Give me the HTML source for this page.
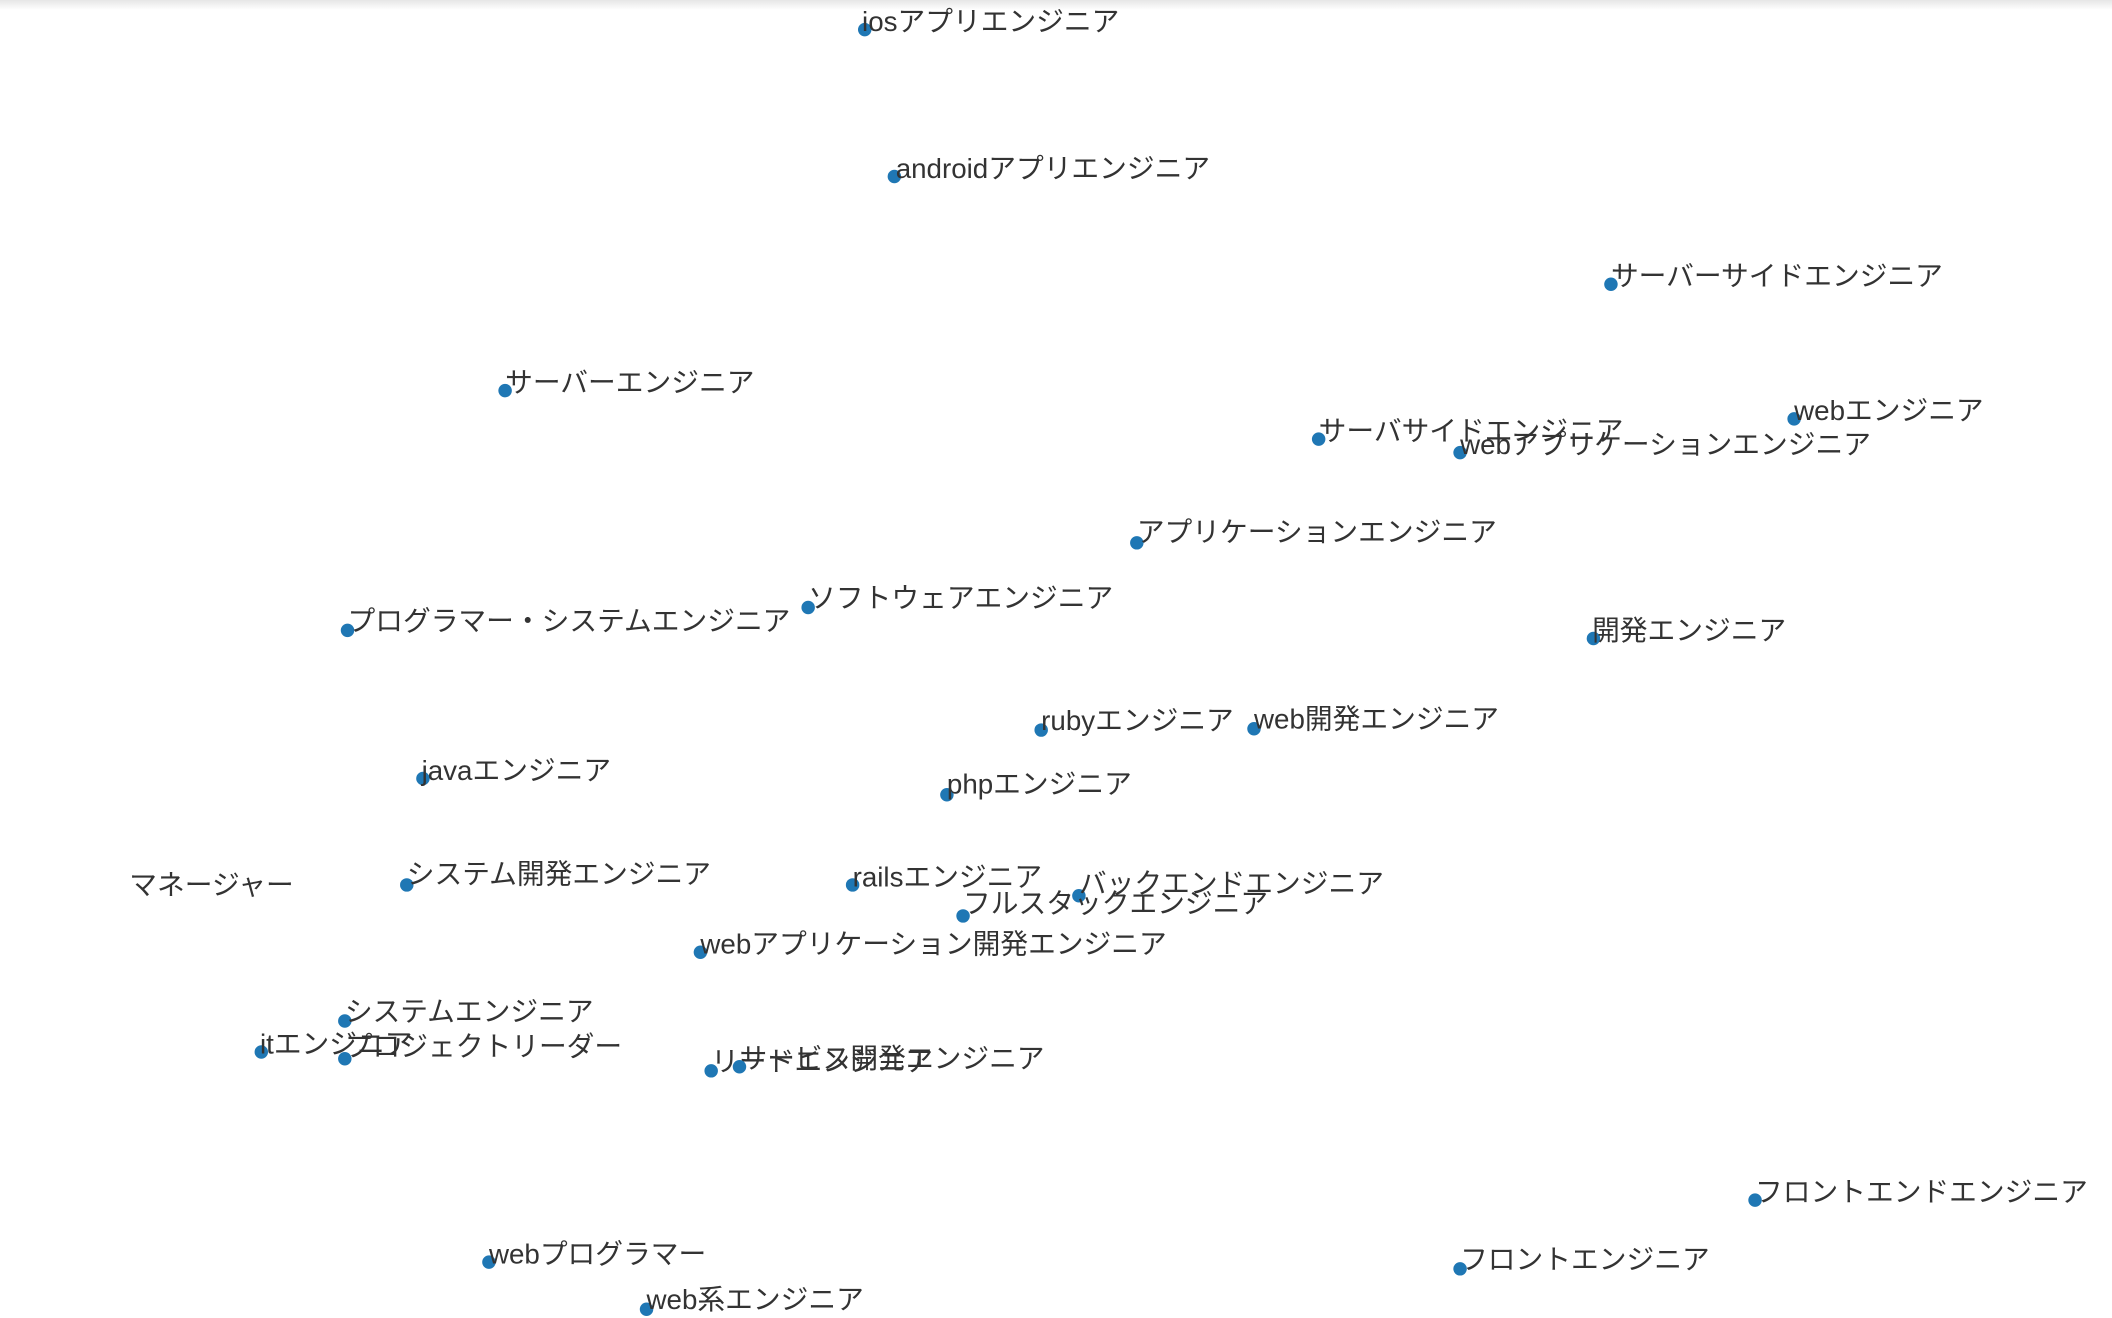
<!DOCTYPE html>
<html><head><meta charset="utf-8"><style>
html,body{margin:0;padding:0;background:#fff;width:2112px;height:1318px;overflow:hidden}
.top{position:absolute;left:0;top:0;width:2112px;height:10px;background:linear-gradient(#e6e6e6,#fff)}
svg{position:absolute;left:0;top:0}
text{font-family:"Liberation Sans","Noto Sans CJK JP",sans-serif;font-size:20.6px;fill:#333}
circle{fill:#1f77b4}
</style></head><body>
<div class="top"></div>
<svg width="2112" height="1318" viewBox="0 0 1568 978.5">
<g>
<circle cx="642" cy="22" r="5"/><text x="640" y="23">iosアプリエンジニア</text>
<circle cx="664" cy="131" r="5"/><text x="665" y="132">androidアプリエンジニア</text>
<circle cx="1196" cy="211" r="5"/><text x="1196" y="212">サーバーサイドエンジニア</text>
<circle cx="375" cy="290" r="5"/><text x="375" y="291">サーバーエンジニア</text>
<circle cx="1332" cy="311" r="5"/><text x="1332" y="312">webエンジニア</text>
<circle cx="979" cy="326" r="5"/><text x="979" y="327">サーバサイドエンジニア</text>
<circle cx="1084" cy="336" r="5"/><text x="1084" y="337">webアプリケーションエンジニア</text>
<circle cx="844" cy="403" r="5"/><text x="844" y="402">アプリケーションエンジニア</text>
<circle cx="600" cy="451" r="5"/><text x="600" y="451">ソフトウェアエンジニア</text>
<circle cx="258" cy="468" r="5"/><text x="258" y="468">プログラマー・システムエンジニア</text>
<circle cx="1183" cy="474" r="5"/><text x="1182" y="475">開発エンジニア</text>
<circle cx="773" cy="542" r="5"/><text x="773" y="542">rubyエンジニア</text>
<circle cx="931" cy="541" r="5"/><text x="931" y="541">web開発エンジニア</text>
<circle cx="314" cy="578" r="5"/><text x="313" y="579">javaエンジニア</text>
<circle cx="703" cy="590" r="5"/><text x="703" y="589">phpエンジニア</text>
<text x="96" y="664">マネージャー</text>
<circle cx="302" cy="657" r="5"/><text x="302" y="656">システム開発エンジニア</text>
<circle cx="633" cy="657" r="5"/><text x="633" y="658">railsエンジニア</text>
<circle cx="801" cy="665" r="5"/><text x="801" y="663">バックエンドエンジニア</text>
<circle cx="715" cy="680" r="5"/><text x="715" y="678">フルスタックエンジニア</text>
<circle cx="520" cy="707" r="5"/><text x="520" y="708">webアプリケーション開発エンジニア</text>
<circle cx="256" cy="758" r="5"/><text x="256" y="758">システムエンジニア</text>
<circle cx="194" cy="781" r="5"/><text x="193" y="782">itエンジニア</text>
<circle cx="256" cy="786" r="5"/><text x="256" y="784">プロジェクトリーダー</text>
<circle cx="528" cy="795" r="5"/><text x="528" y="795">リードエンジニア</text>
<circle cx="549" cy="792" r="5"/><text x="549" y="793">サービス開発エンジニア</text>
<circle cx="1303" cy="891" r="5"/><text x="1303" y="892">フロントエンドエンジニア</text>
<circle cx="363" cy="937" r="5"/><text x="363" y="938">webプログラマー</text>
<circle cx="1084" cy="942" r="5"/><text x="1084" y="942">フロントエンジニア</text>
<circle cx="480" cy="972" r="5"/><text x="480" y="972">web系エンジニア</text>
</g>
</svg>
</body></html>
